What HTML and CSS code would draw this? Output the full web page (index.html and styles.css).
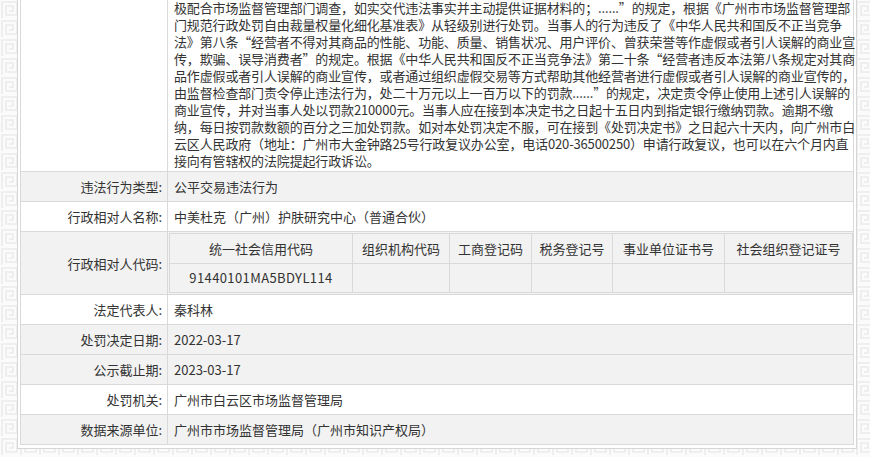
FILE: index.html
```html
<!DOCTYPE html>
<html lang="zh-CN">
<head>
    <meta charset="UTF-8">
    <meta name="viewport" content="width=device-width, initial-scale=1.0">
    <title>行政处罚信息</title>
    <link rel="stylesheet" href="styles.css">
</head>
<body>
    <div class="panel">
        <table class="detail">
            <colgroup>
                <col class="label-col">
                <col>
            </colgroup>
            <tr>
                <th></th>
                <td class="long">极配合市场监督管理部门调查，如实交代违法事实并主动提供证据材料的；......”的规定，根据《广州市市场监督管理部<br>门规范行政处罚自由裁量权量化细化基准表》从轻级别进行处罚。当事人的行为违反了《中华人民共和国反不正当竞争<br>法》第八条“经营者不得对其商品的性能、功能、质量、销售状况、用户评价、曾获荣誉等作虚假或者引人误解的商业宣<br>传，欺骗、误导消费者”的规定。根据《中华人民共和国反不正当竞争法》第二十条“经营者违反本法第八条规定对其商<br>品作虚假或者引人误解的商业宣传，或者通过组织虚假交易等方式帮助其他经营者进行虚假或者引人误解的商业宣传的，<br>由监督检查部门责令停止违法行为，处二十万元以上一百万以下的罚款......”的规定，决定责令停止使用上述引人误解的<br>商业宣传，并对当事人处以罚款210000元。当事人应在接到本决定书之日起十五日内到指定银行缴纳罚款。逾期不缴<br>纳，每日按罚款数额的百分之三加处罚款。如对本处罚决定不服，可在接到《处罚决定书》之日起六十天内，向广州市白<br>云区人民政府（地址：广州市大金钟路25号行政复议办公室，电话020-36500250）申请行政复议，也可以在六个月内直<br>接向有管辖权的法院提起行政诉讼。</td>
            </tr>
            <tr class="grey">
                <th>违法行为类型:</th>
                <td>公平交易违法行为</td>
            </tr>
            <tr>
                <th>行政相对人名称:</th>
                <td>中美杜克（广州）护肤研究中心（普通合伙）</td>
            </tr>
            <tr class="grey">
                <th>行政相对人代码:</th>
                <td class="nested">
                    <table class="codes">
                        <colgroup>
                            <col class="c1">
                            <col class="c2">
                            <col class="c3">
                            <col class="c4">
                            <col class="c5">
                            <col class="c6">
                        </colgroup>
                        <tr>
                            <th>统一社会信用代码</th>
                            <th>组织机构代码</th>
                            <th>工商登记码</th>
                            <th>税务登记号</th>
                            <th>事业单位证书号</th>
                            <th>社会组织登记证号</th>
                        </tr>
                        <tr>
                            <td>91440101MA5BDYL114</td>
                            <td></td>
                            <td></td>
                            <td></td>
                            <td></td>
                            <td></td>
                        </tr>
                    </table>
                </td>
            </tr>
            <tr>
                <th>法定代表人:</th>
                <td>秦科林</td>
            </tr>
            <tr class="grey">
                <th>处罚决定日期:</th>
                <td>2022-03-17</td>
            </tr>
            <tr class="grey">
                <th>公示截止期:</th>
                <td>2023-03-17</td>
            </tr>
            <tr>
                <th>处罚机关:</th>
                <td>广州市白云区市场监督管理局</td>
            </tr>
            <tr class="grey">
                <th>数据来源单位:</th>
                <td>广州市市场监督管理局（广州市知识产权局）</td>
            </tr>
        </table>
    </div>
</body>
</html>
```

FILE: styles.css
```css
html {
    font-size: 13px;
}
body {
    margin: 0;
    font-family: "Noto Sans CJK SC", "Noto Sans", sans-serif;
    color: #333333;
    background-color: #fbfbfb;
    background-image: url("data:image/svg+xml,%3Csvg xmlns='http://www.w3.org/2000/svg' width='19' height='19'%3E%3Cpath d='M2 18V2H17V15H6V6H13V11H9' fill='none' stroke='%23ebebeb' stroke-width='1.6'/%3E%3C/svg%3E");
}

.panel {
    margin: -11px 13px 10px 17px;
    padding: 2px 2px 3px;
    background: #ffffff;
    border: 1px solid #d6d6d6;
}

table {
    border-collapse: collapse;
}
.detail {
    width: 100%;
    table-layout: fixed;
    border: 1px solid #d9d9d9;
}
.detail .label-col {
    width: 147px;
}
.detail > tbody > tr > th,
.detail > tbody > tr > td {
    border: 1px solid #d9d9d9;
    padding: 6px;
    line-height: 17px;
    font-size: 13px;
}
.detail > tbody > tr > th {
    padding-right: 5px;
    text-align: right;
    font-weight: normal;
    vertical-align: middle;
}
.detail > tbody > tr > td {
    text-align: left;
}
.detail .long {
    padding-bottom: 2px;
    white-space: nowrap;
    letter-spacing: -.15px;
}
.detail .grey > th,
.detail .grey > td {
    background: #f2f2f2;
}
.detail > tbody > tr > td.nested {
    padding: 1px;
}

.codes {
    width: 100%;
    table-layout: fixed;
}
.codes th,
.codes td {
    border: 1px solid #d9d9d9;
    background: #f2f2f2;
    text-align: center;
    font-weight: normal;
    font-size: 13px;
    line-height: 17px;
    padding: 6px 2px;
    white-space: nowrap;
}
.codes td {
    padding: 5px 2px 6px;
    letter-spacing: .4px;
}
.codes .c1 { width: 183px; }
.codes .c2 { width: 97px; }
.codes .c3 { width: 82px; }
.codes .c4 { width: 81px; }
.codes .c5 { width: 112px; }
.codes .c6 { width: 128px; }
```
